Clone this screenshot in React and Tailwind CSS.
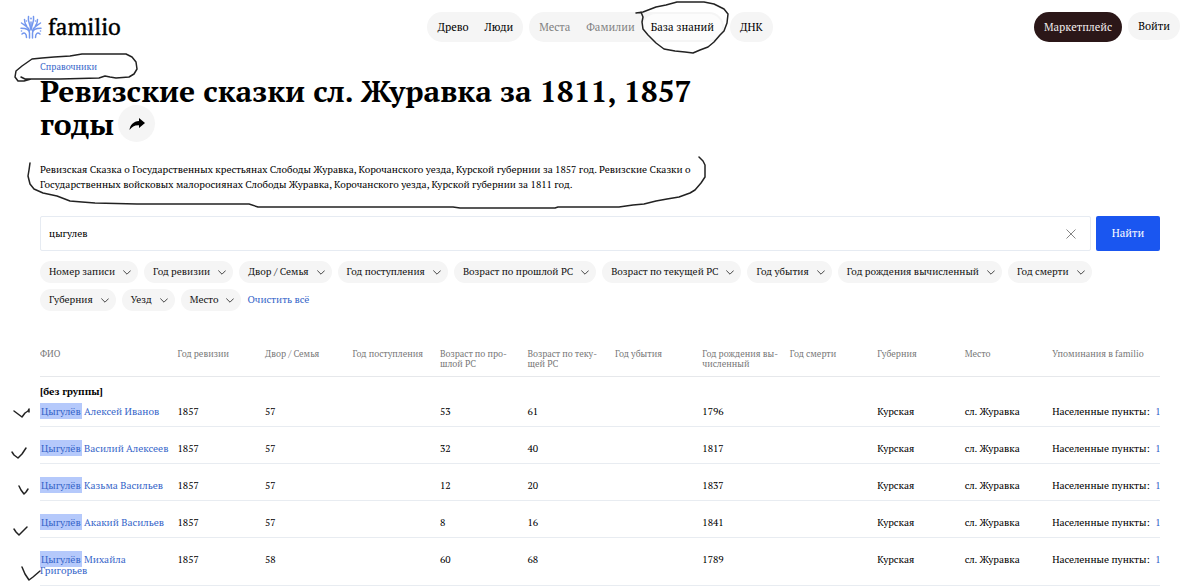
import React from 'react';

const filters = [
  'Номер записи',
  'Год ревизии',
  'Двор / Семья',
  'Год поступления',
  'Возраст по прошлой РС',
  'Возраст по текущей РС',
  'Год убытия',
  'Год рождения вычисленный',
  'Год смерти',
  'Губерния',
  'Уезд',
  'Место',
];

const columns = [
  'ФИО',
  'Год ревизии',
  'Двор / Семья',
  'Год поступления',
  'Возраст по про\u00adшлой РС',
  'Возраст по теку\u00adщей РС',
  'Год убытия',
  'Год рождения вы\u00adчисленный',
  'Год смерти',
  'Губерния',
  'Место',
  'Упоминания в familio',
];

const people = [
  { name: 'Алексей Иванов', yard: 57, before: 53, now: 61, born: 1796 },
  { name: 'Василий Алексеев', yard: 57, before: 32, now: 40, born: 1817 },
  { name: 'Казьма Васильев', yard: 57, before: 12, now: 20, born: 1837 },
  { name: 'Акакий Васильев', yard: 57, before: 8, now: 16, born: 1841 },
  { name: 'Михайла Григорьев', yard: 58, before: 60, now: 68, born: 1789 },
];

const Logo = () => (
  <a href="#" className="flex items-center gap-[6px] justify-self-start">
    <svg className="w-[22px] h-6" viewBox="0 0 22 24" fill="none" stroke="#7397ee" strokeWidth="1.5" strokeLinecap="round">
      <path d="M9.500 23V18C9.500 14.500 7 13.300 1 13.300M12.500 23V18C12.500 14.500 15 13.300 21 13.300" />
      <path d="M6.500 22.500C6.500 18.500 4.500 17 2 19M15.500 22.500C15.500 18.500 17.500 17 20 19" />
      <path d="M11 15V7" />
      <path d="M10.500 14C10.500 9 7.500 7.500 8.500 1.500M11.500 14C11.500 9 14.500 7.500 13.500 1.500" />
      <path d="M9.500 16C8.500 11.500 5 10.500 1.500 8M12.500 16C13.500 11.500 17 10.500 20.500 8M6.500 10.800C5 9 4.500 7.500 4.500 4.500M15.500 10.800C17 9 17.500 7.500 17.500 4.500" />
      <g fill="#7397ee" stroke="none">
        <circle cx="11" cy="3.500" r="0.900" />
        <circle cx="6.500" cy="6" r="0.800" />
        <circle cx="15.500" cy="6" r="0.800" />
        <circle cx="1.500" cy="16" r="0.800" />
        <circle cx="20.500" cy="16" r="0.800" />
      </g>
    </svg>
    <span className="text-[23px] leading-[30px] font-medium text-black [-webkit-text-stroke:0.4px_black]">familio</span>
  </a>
);

const NavLink = ({ children, muted, active }) => (
  <a
    href="#"
    className={`flex items-center h-[26px] px-2 rounded-full ${muted ? 'text-[#808080]' : 'text-black'} ${
      active ? 'bg-[#fcfcfc]' : ''
    }`}
  >
    {children}
  </a>
);

const Header = () => (
  <header className="grid grid-cols-[1fr_auto_1fr] items-start px-5 pt-3 text-[11px] leading-4">
    <Logo />
    <nav className="flex gap-[6px]">
      <div className="flex p-[2px] rounded-full bg-[#f5f5f5]">
        <NavLink>Древо</NavLink>
        <NavLink>Люди</NavLink>
      </div>
      <div className="flex p-[2px] rounded-full bg-[#f5f5f5]">
        <NavLink muted>Места</NavLink>
        <NavLink muted>Фамилии</NavLink>
        <NavLink active>База знаний</NavLink>
      </div>
      <div className="flex p-[2px] rounded-full bg-[#f5f5f5]">
        <NavLink>ДНК</NavLink>
      </div>
    </nav>
    <div className="flex items-start gap-[6px] justify-self-end">
      <a href="#" className="flex items-center h-[30px] px-[10px] rounded-full bg-[#2b1718] text-[#f3eeee]">
        Маркетплейс
      </a>
      <button type="button" className="h-7 px-[10px] rounded-full bg-[#f5f5f5] text-black">
        Войти
      </button>
    </div>
  </header>
);

const FilterChip = ({ label }) => (
  <button type="button" className="flex items-center gap-2 h-[22px] pl-[9px] pr-[7px] rounded-full bg-[#f5f5f5] text-[#111]">
    {label}
    <svg className="w-2 h-[5px]" viewBox="0 0 8 5" fill="none" stroke="#333" strokeWidth="0.9">
      <path d="M0.300 0.500L4 4.200L7.700 0.500" />
    </svg>
  </button>
);

const PersonRow = ({ person, first }) => {
  const cell = `${first ? 'pt-2' : 'pt-4'} pb-[9px] align-top`;
  return (
    <tr className="border-b border-[#e8ecf1]">
      <td className={`${cell} pr-1 text-[#3565c9]`}>
        <a href="#">
          <mark className="bg-[#b5c9fb] text-[#3565c9] px-[1px] pt-[2px] pb-[1px]">Цыгулёв</mark> {person.name}
        </a>
      </td>
      <td className={cell}>1857</td>
      <td className={cell}>{person.yard}</td>
      <td className={cell}></td>
      <td className={cell}>{person.before}</td>
      <td className={cell}>{person.now}</td>
      <td className={cell}></td>
      <td className={cell}>{person.born}</td>
      <td className={cell}></td>
      <td className={cell}>Курская</td>
      <td className={cell}>сл. Журавка</td>
      <td className={`${cell} whitespace-nowrap`}>
        Населенные пункты: <a href="#" className="ml-[3px] text-[#3565c9]">1</a>
      </td>
    </tr>
  );
};

// Pen marks drawn over the page
const PenMarks = () => (
  <svg
    className="absolute top-0 left-0 w-[1200px] h-[587px] pointer-events-none"
    viewBox="0 0 1200 587"
    fill="none"
    stroke="#222"
    strokeWidth="1.5"
    strokeLinecap="round"
    strokeLinejoin="round"
  >
    <path d="M636 13L643 12L656 7L666 5L677 2L704 2L714 4L724 9L728 14L727 23L724 31L720 35L714 42L708 47L700 50L693 53L685 52L675 51L664 49L656 43L648 35L643 29L642 22L643 17L641 12" />
    <path d="M31 79L24 81L18 81L15 77L16 71L22 66L32 59L42 58L54 57L70 56L82 54L126 54L132 57L136 62L137 69L134 74L129 77L116 78L110 77L105 76L99 78L60 79L25 79L21 77" />
    <path d="M30 163L29 170L28 176L30 184L34 189L43 193L57 196L70 201L82 202L95 203L137 204L249 204L258 207L453 207L460 208L555 208L558 207L619 207L633 205L644 204L656 201L667 199L679 197L690 193L695 190L701 183L705 177L705 165L703 161L699 157" />
    <path d="M14 411L18 414L22 417L25 413L28 411L29 409L29 412" />
    <path d="M12 452L14 455L18 458L22 454L26 448" />
    <path d="M19 486L21 490L24 494L26 492L28 489" />
    <path d="M14 529L16 532L19 535L23 531L27 527" />
    <path d="M22 567L25 574L29 580L33 577L40 571" />
  </svg>
);

export default function App() {
  return (
    <div className="relative bg-white text-black font-['PT_Serif','Liberation_Serif',serif]">
      <Header />

      <main className="px-10 text-[10px]">
        <a href="#" className="block w-fit mt-[19px] text-[9px] leading-3 text-[#3565c9]">
          Справочники
        </a>

        <h1 className="mt-[2px] max-w-[664px] text-[30px] leading-[33px] font-bold">
          Ревизские сказки сл. Журавка за 1811, 1857 годы
          <button
            type="button"
            aria-label="Поделиться"
            className="inline-flex items-center justify-center align-middle w-[37px] h-[37px] -mt-3 -mb-1 ml-1 rounded-full bg-[#f5f5f5]"
          >
            <svg className="w-4 h-3" viewBox="0 0 16 12" fill="black">
              <path d="M10 0L16 5L10 10V7.200C5.500 7 3 8.500 0.500 12C1 7 4.500 3.200 10 2.900Z" />
            </svg>
          </button>
        </h1>

        <p className="mt-[21px] max-w-[664px] leading-[15px]">
          Ревизская Сказка о Государственных крестьянах Слободы Журавка, Корочанского уезда, Курской губернии за 1857 год.
          Ревизские Сказки о Государственных войсковых малоросиянах Слободы Журавка, Корочанского уезда, Курской губернии за
          1811 год.
        </p>

        <form className="flex gap-[5px] mt-6" onSubmit={(e) => e.preventDefault()}>
          <div className="flex flex-1 items-center h-[35px] border border-[#e6ebf2] rounded-[2px]">
            <input
              type="text"
              aria-label="Поиск"
              defaultValue="цыгулев"
              className="flex-1 h-full px-2 outline-none"
            />
            <button type="button" aria-label="Очистить" className="mr-[14px]">
              <svg className="w-[10px] h-[10px]" viewBox="0 0 10 10" stroke="#777" strokeWidth="0.9">
                <path d="M0.500 0.500L9.500 9.500M9.500 0.500L0.500 9.500" />
              </svg>
            </button>
          </div>
          <button type="submit" className="w-16 h-[35px] rounded-[2px] bg-[#1a56f0] text-[11px] text-white">
            Найти
          </button>
        </form>

        <div className="flex flex-wrap items-center gap-[6px] mt-[10px] leading-4">
          {filters.map((label) => (
            <FilterChip key={label} label={label} />
          ))}
          <button type="button" className="text-[#3565c9]">Очистить всё</button>
        </div>

        <div className="mt-[38px] overflow-hidden">
          <table className="w-full table-fixed border-collapse leading-[11px]">
            <thead>
              <tr className="border-b border-[#e6e8eb]">
                {columns.map((title, i) => (
                  <th
                    key={title}
                    className={`pb-[7px] pr-2 align-top text-left text-[9px] leading-[10px] font-normal text-[#777] ${
                      i === 0 ? 'w-[12.28%]' : i === 11 ? '' : 'w-[7.81%]'
                    }`}
                  >
                    {title}
                  </th>
                ))}
              </tr>
            </thead>
            <tbody>
              <tr>
                <th colSpan={12} className="pt-[9px] text-left leading-3 font-bold">
                  [без группы]
                </th>
              </tr>
              {people.map((person, i) => (
                <PersonRow key={person.name} person={person} first={i === 0} />
              ))}
            </tbody>
          </table>
        </div>
      </main>

      <PenMarks />
    </div>
  );
}
